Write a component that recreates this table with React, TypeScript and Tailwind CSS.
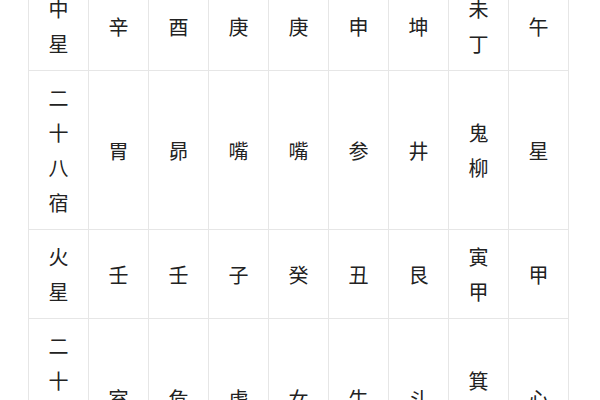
import React from "react";

const rows: string[][] = [
  ["中星", "辛", "酉", "庚", "庚", "申", "坤", "未丁", "午"],
  ["二十八宿", "胃", "昴", "嘴", "嘴", "参", "井", "鬼柳", "星"],
  ["火星", "壬", "壬", "子", "癸", "丑", "艮", "寅甲", "甲"],
  ["二十八宿", "室", "危", "虚", "女", "牛", "斗", "箕尾", "心"],
];

export default function App() {
  return (
    <div className="h-[400px] w-[600px] overflow-hidden bg-white font-['Noto_Sans_CJK_SC',sans-serif] text-[20px] leading-[35px] text-[#222]">
      <div className="-mt-[19px] ml-[28px] grid w-[541px] grid-cols-[repeat(9,59px)] gap-px bg-[#e6e6e6] p-px">
        {rows.map((row, i) =>
          row.map((cell, j) => (
            <div
              key={i + "-" + j}
              className="flex flex-col items-center justify-center bg-white py-[9px]"
            >
              {cell.split("").map((ch, k) => (
                <span key={k}>{ch}</span>
              ))}
            </div>
          ))
        )}
      </div>
    </div>
  );
}
